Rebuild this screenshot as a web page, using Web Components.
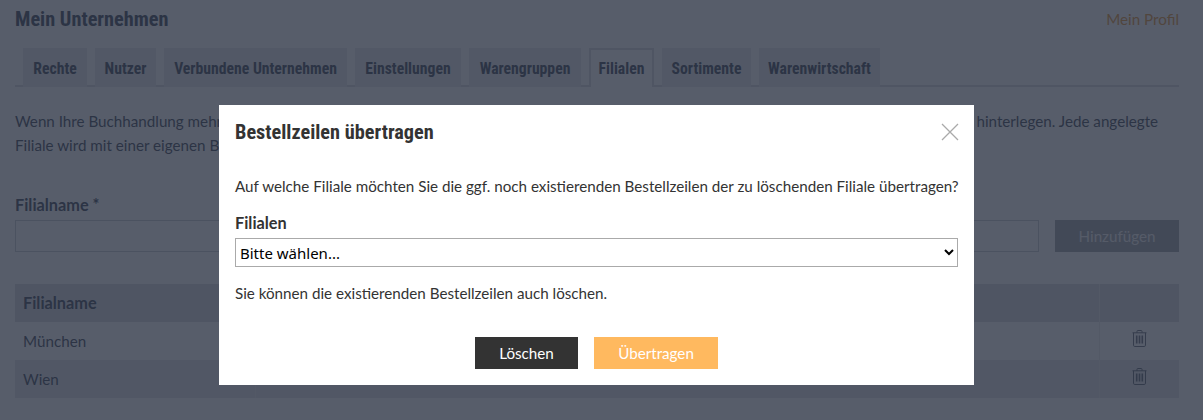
<!DOCTYPE html>
<html lang="de"><head><meta charset="utf-8"><title>Mein Unternehmen</title>
<style>
html,body{margin:0;height:420px;overflow:hidden;background:#fff;font-family:Lato,"Noto Sans",sans-serif;color:#2a3346}
</style></head><body>
<app-page></app-page>
<modal-dialog heading="Bestellzeilen übertragen"></modal-dialog>
<script>
const HEAD='"Liberation Sans Narrow","Roboto Condensed",Roboto,sans-serif';
const BODY='Lato,"Noto Sans",sans-serif';
const TRASH=`<svg width="15" height="17" viewBox="0 0 15 17" fill="none" stroke="currentColor" stroke-width="1" opacity=".8"><path d="M.5 2.8h14M5 2.8V1.3q0-.8.8-.8h3.4q.8 0 .8.8v1.5M1.5 2.8v12.4q0 1.3 1.3 1.3h9.4q1.3 0 1.3-1.3V2.8"/><path stroke-width="1.6" d="M4.7 5.5v8M7.5 5.5v8M10.3 5.5v8"/></svg>`;
class TabBar extends HTMLElement{constructor(){super();this.attachShadow({mode:'open'}).innerHTML=`<style>
:host{display:flex;gap:8px;padding:0 8px;height:39px;box-sizing:border-box;border-bottom:2px solid #d5d8dd;font:700 15.7px/1 ${HEAD};color:#2a3346}
span{height:39px;box-sizing:border-box;background:#e6e6e8;display:flex;align-items:center;justify-content:center;padding-top:2px}
.a{background:#fff;border:2px solid #d5d8dd;border-bottom:0;padding-top:0}
</style>${[['Rechte',64],['Nutzer',61],['Verbundene Unternehmen',183],['Einstellungen',106],['Warengruppen',112],['Filialen',65,1],['Sortimente',89],['Warenwirtschaft',121]].map(t=>`<span class="${t[2]?'a':''}" style="width:${t[1]}px">${t[0]}</span>`).join('')}`}}
customElements.define('tab-bar',TabBar);
class BranchTable extends HTMLElement{constructor(){super();this.attachShadow({mode:'open'}).innerHTML=`<style>
:host{display:grid;grid-template-columns:241px 1fr 1fr 79px;font:15.2px/38px ${BODY};color:#2a3346}
div{height:38px;padding-left:8px;border-right:1px solid #e9eaec;box-sizing:border-box}
.s{background:#e0e1e4}.h{font-weight:700;font-size:16.3px;background:#d5d8dd}
.c{display:flex;align-items:center;justify-content:center;padding:0;border:0}
.c svg{margin-top:-6px}
</style>
<div class="h">Filialname</div><div class="h" style="grid-column:span 2"></div><div class="h c"></div>
<div>München</div><div style="grid-column:span 2"></div><div class="c">${TRASH}</div>
<div class="s">Wien</div><div class="s" style="grid-column:span 2"></div><div class="s c">${TRASH}</div>`}}
customElements.define('branch-table',BranchTable);
class AppPage extends HTMLElement{constructor(){super();this.attachShadow({mode:'open'}).innerHTML=`<style>
:host{display:block;padding:0 24px 0 15px;font:15.2px/24px ${BODY};color:#2a3346}
header{display:flex;justify-content:space-between;align-items:center;height:48px;padding-bottom:11px;box-sizing:border-box}
h1{margin:0;font:700 20.3px/24px ${HEAD}}
a{color:#e08a1e}
p{margin:22px 0 0;height:48px;white-space:nowrap}
label{display:block;font-weight:700;font-size:16.3px;margin-top:37px;height:24px;line-height:22px}
.f{display:flex;gap:16px;height:32px;margin-bottom:32px;margin-top:2px}
input{flex:1;border:1px solid #c4c7cd;box-sizing:border-box;height:32px;background:#fff}
button{width:124px;border:0;background:#969aa0;color:#f4f4f4;font:inherit}
</style>
<header><h1>Mein Unternehmen</h1><a>Mein Profil</a></header>
<tab-bar></tab-bar>
<p>Wenn Ihre Buchhandlung mehrere Filialen hat, können Sie diese hier anlegen und für jede Filiale abweichende Daten, Konten und Lieferadressen hinterlegen. Jede angelegte<br>Filiale wird mit einer eigenen Bestellzeile geführt.</p>
<label>Filialname *</label>
<div class="f"><input aria-label="Filialname"><button>Hinzufügen</button></div>
<branch-table></branch-table>`}}
customElements.define('app-page',AppPage);
class ModalDialog extends HTMLElement{constructor(){super();this.attachShadow({mode:'open'}).innerHTML=`<style>
:host{position:fixed;inset:0;background:rgba(45,52,69,.8);display:block;font:15.2px/24px ${BODY};color:#333}
.m{position:absolute;left:219px;top:105px;width:755px;height:280px;box-sizing:border-box;padding:15px 16px 16px 16px;background:#fff;display:flex;flex-direction:column}
.t{display:flex;justify-content:space-between;align-items:center;height:24px}
h2{margin:0;font:700 20.3px/24px ${HEAD};color:#333}
.x{margin-top:-1px;margin-right:-1px;display:block}
p{margin:0}
.q{margin-top:30px;white-space:nowrap}
label{font-weight:700;font-size:16.3px;margin-top:13px;height:24px;display:block}
select{display:block;width:100%;height:29px;margin-top:3px;border:1px solid #aaa;background:#fff;color:#000;font:15px "Noto Sans",sans-serif;border-radius:0;padding:0}
.i{margin-top:14px}
.b{display:flex;justify-content:center;gap:16px;margin-top:auto}
button{height:32px;border:0;color:#fff;font:inherit;padding:0}
.d{width:103px;background:#333}.o{width:124px;background:#ffb95f}
</style><div class="m" role="dialog">
<div class="t"><h2>${this.getAttribute('heading')}</h2><svg class="x" width="18" height="18" viewBox="0 0 18 18" stroke="#aaa" stroke-width="1.3"><path d="M1 1l16 16M17 1L1 17"/></svg></div>
<p class="q">Auf welche Filiale möchten Sie die ggf. noch existierenden Bestellzeilen der zu löschenden Filiale übertragen?</p>
<label>Filialen</label>
<select><option>Bitte wählen...</option></select>
<p class="i">Sie können die existierenden Bestellzeilen auch löschen.</p>
<div class="b"><button class="d">Löschen</button><button class="o">Übertragen</button></div>
</div>`}}
customElements.define('modal-dialog',ModalDialog);
</script>
</body></html>
